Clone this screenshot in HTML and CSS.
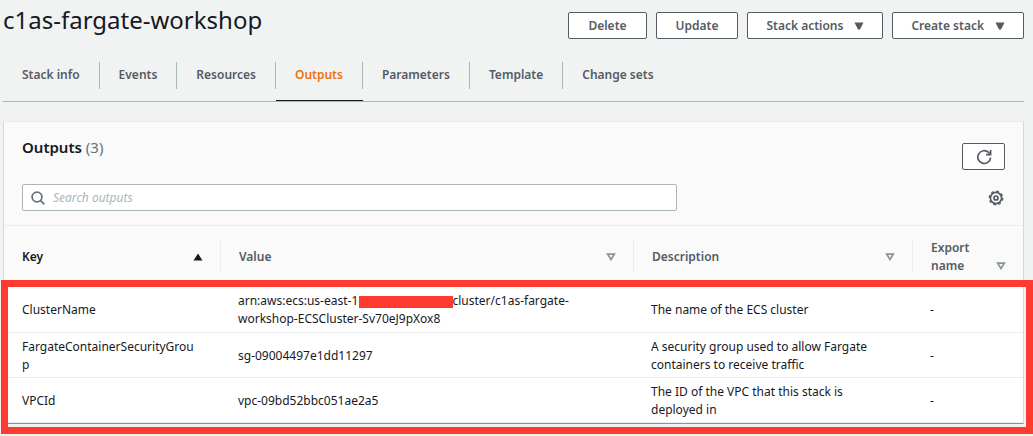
FILE: index.html
```html
<!DOCTYPE html>
<html lang="en">
<head>
<meta charset="utf-8">
<title>c1as-fargate-workshop</title>
<link rel="stylesheet" href="styles.css">
</head>
<body>
<header class="page-header">
  <h1 class="title">c1as-fargate-workshop</h1>
  <div class="actions">
    <button class="btn" type="button">Delete</button>
    <button class="btn" type="button">Update</button>
    <button class="btn menu" type="button">Stack actions <svg class="caret" viewBox="0 0 10 8"><path d="M0.5 0.5h9L6 7.5H4z" fill="currentColor"/></svg></button>
    <button class="btn menu" type="button">Create stack <svg class="caret" viewBox="0 0 10 8"><path d="M0.5 0.5h9L6 7.5H4z" fill="currentColor"/></svg></button>
  </div>
</header>
<nav class="tabs">
  <a class="tab" href="#info"><span class="tab-label">Stack info</span></a>
  <a class="tab" href="#events"><span class="tab-label">Events</span></a>
  <a class="tab" href="#resources"><span class="tab-label">Resources</span></a>
  <a class="tab active" href="#outputs"><span class="tab-label">Outputs</span></a>
  <a class="tab" href="#parameters"><span class="tab-label">Parameters</span></a>
  <a class="tab" href="#template"><span class="tab-label">Template</span></a>
  <a class="tab" href="#changes"><span class="tab-label">Change sets</span></a>
</nav>
<main class="panel">
  <div class="panel-head">
    <h2 class="panel-title">Outputs <span class="count">(3)</span></h2>
    <button class="btn refresh" type="button" aria-label="Refresh"><svg width="16" height="16" viewBox="0 0 16 16" fill="none" stroke="currentColor" stroke-width="1.7"><path d="M14.6 8.6A6.4 6.4 0 1 1 12.6 3.4L14.2 5"/><path d="M14.6 1v4.6H10"/></svg></button>
  </div>
  <div class="tools">
    <label class="search">
      <svg width="14" height="14" viewBox="0 0 14 14" fill="none" stroke="currentColor" stroke-width="1.8"><circle cx="6" cy="6" r="4.9"/><path d="M9.3 9.3l4 4"/></svg>
      <input class="search-input" type="text" placeholder="Search outputs" aria-label="Search outputs">
    </label>
    <button class="gear" type="button" aria-label="Preferences"><svg width="16" height="16" viewBox="0 0 16 16" fill="none" stroke="currentColor"><circle cx="8" cy="8" r="5.6" stroke-width="1.7"/><circle cx="8" cy="8" r="6.7" stroke-width="1.4" stroke-dasharray="2.7 2.56"/><circle cx="8" cy="8" r="2" stroke-width="1.7"/></svg></button>
  </div>
  <table class="outputs">
    <colgroup><col class="col-key"><col class="col-value"><col class="col-desc"><col class="col-export"></colgroup>
    <thead>
      <tr>
        <th class="sorted"><div class="th">Key <svg class="sort" viewBox="0 0 10 8"><path d="M5 0.5L9.5 7.5h-9z" fill="currentColor"/></svg></div></th>
        <th><div class="th">Value <svg class="sort" viewBox="0 0 10 8"><path d="M1.7 1.2h6.6L5 6.5z" fill="none" stroke="currentColor" stroke-width="1.7"/></svg></div></th>
        <th><div class="th">Description <svg class="sort" viewBox="0 0 10 8"><path d="M1.7 1.2h6.6L5 6.5z" fill="none" stroke="currentColor" stroke-width="1.7"/></svg></div></th>
        <th><div class="th">Export name <svg class="sort low" viewBox="0 0 10 8"><path d="M1.7 1.2h6.6L5 6.5z" fill="none" stroke="currentColor" stroke-width="1.7"/></svg></div></th>
      </tr>
    </thead>
    <tbody>
      <tr><td>ClusterName</td><td>arn:aws:ecs:us-east-1:<span class="redacted"></span>cluster/c1as-fargate-<br>workshop-ECSCluster-Sv70eJ9pXox8</td><td>The name of the ECS cluster</td><td>-</td></tr>
      <tr><td>FargateContainerSecurityGrou<br>p</td><td>sg-09004497e1dd11297</td><td>A security group used to allow Fargate containers to receive traffic</td><td>-</td></tr>
      <tr><td>VPCId</td><td>vpc-09bd52bbc051ae2a5</td><td>The ID of the VPC that this stack is deployed in</td><td>-</td></tr>
    </tbody>
  </table>
  <div class="highlight"></div>
</main>
</body>
</html>
```
FILE: styles.css
```css
* { box-sizing: border-box; }
body {
  margin: 0;
  padding: 0 9px 12px 3px;
  background: #f1f3f3;
  color: #16191f;
  font: 12px/18px "Noto Sans", "Open Sans", sans-serif;
  overflow: hidden;
}
.page-header { display: flex; justify-content: space-between; align-items: flex-start; height: 62px; }
.title { margin: 4px 0 0; font-size: 24px; line-height: 32px; font-weight: 400; }
.actions { display: flex; gap: 9px; padding-top: 12px; }
.btn {
  display: flex;
  align-items: center;
  gap: 11px;
  height: 27px;
  padding: 0 19px;
  border: 1px solid #545b64;
  border-radius: 2px;
  background: #fff;
  color: #545b64;
  font: 600 12px/18px "Noto Sans", "Open Sans", sans-serif;
}
.menu { padding: 0 18px; }
.caret { width: 10px; height: 8px; }
.tabs { display: flex; border-bottom: 1px solid #aab7b8; }
.tab {
  height: 39px;
  color: #545b64;
  font-weight: 600;
  text-decoration: none;
}
.tab-label { display: block; height: 27px; padding: 4px 19px 0; border-right: 1px solid #aab7b8; }
.tab:last-child .tab-label { border-right: 0; }
.tab.active { color: #ec7211; box-shadow: inset 0 -1px #16191f; }
.panel {
  position: relative;
  margin-top: 19px;
  border: 1px solid #d5dbdb;
  border-top-color: #eaeded;
  border-bottom-color: #879596;
  background: #fafafa;
}
.panel-head { display: flex; justify-content: space-between; align-items: flex-start; padding: 14px 18px 0; }
.panel-title { margin: 0; font-size: 15px; line-height: 22px; font-weight: 600; }
.count { color: #687078; font-weight: 400; }
.refresh { width: 43px; margin-top: 7px; padding: 0; justify-content: center; }
.tools { display: flex; justify-content: space-between; align-items: center; padding: 14px 19px 14px 18px; border-bottom: 1px solid #eaeded; }
.search {
  display: flex;
  align-items: center;
  gap: 8px;
  flex: 0 1 655px;
  height: 27px;
  padding: 0 8px;
  border: 1px solid #aab7b8;
  border-radius: 2px;
  background: #fff;
  color: #687078;
}
.search-input { flex: 1; min-width: 0; padding: 0; border: 0; outline: 0; background: none; font: 12px/18px "Noto Sans", "Open Sans", sans-serif; }
.search-input::placeholder { color: #aab7b8; font-style: italic; opacity: 1; }
.gear { display: flex; padding: 0; border: 0; background: none; color: #545b64; }
.outputs { width: 100%; table-layout: fixed; border-collapse: collapse; }
.col-key { width: 217px; }
.col-value { width: 413px; }
.col-desc { width: 279px; }
.outputs th { height: 61px; padding: 0; text-align: left; color: #545b64; font-weight: 600; }
.outputs th.sorted { color: #16191f; }
.th { display: flex; justify-content: space-between; align-items: center; min-height: 31px; padding: 0 17px 0 18px; border-right: 1px solid #eaeded; }
th:last-child .th { border-right: 0; }
.sort { flex: none; width: 10px; height: 8px; color: #879596; }
.sorted .sort { color: #16191f; }
.sort.low { align-self: flex-end; margin-bottom: 5px; }
.outputs td { height: 45px; padding: 5px 18px 3px 17px; background: #fff; border-bottom: 1px solid #eaeded; overflow-wrap: anywhere; }
.outputs td:first-child { padding-left: 18px; }
.redacted { display: inline-block; width: 94px; height: 12px; margin-left: -3px; background: #ff3b30; vertical-align: middle; }
.highlight { position: absolute; left: -3px; right: -10px; top: 158px; bottom: -11px; border: 7px solid #ff3b30; pointer-events: none; }
```
